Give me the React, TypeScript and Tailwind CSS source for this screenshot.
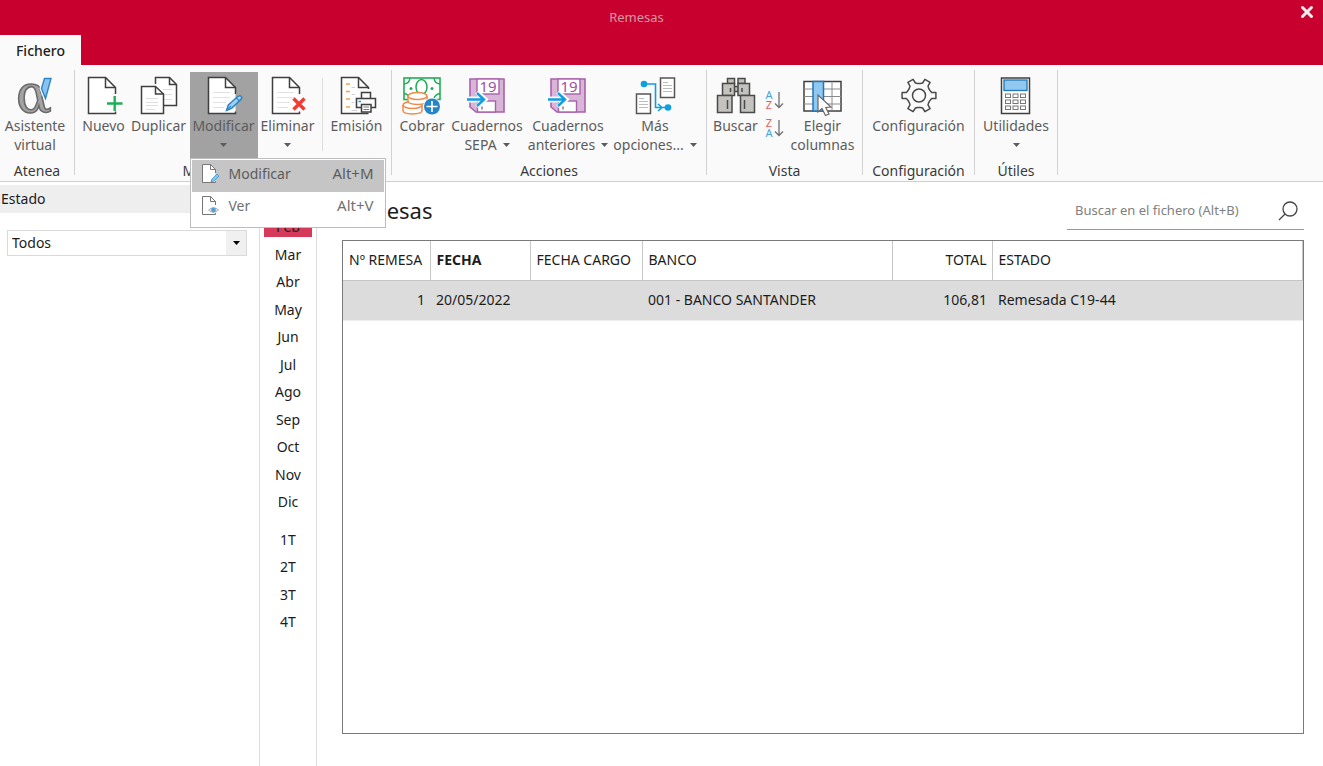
import React, { useState } from 'react';
import { X } from 'lucide-react';

const INK = '#3f3f3f';
const BLUE = '#0f9fe0';

const Svg = ({ children }: { children: React.ReactNode }) => (
  <svg width="40" height="40" viewBox="0 0 40 40" fill="none" aria-hidden="true" className="shrink-0 overflow-visible">
    {children}
  </svg>
);

const Page = ({ lines = false }: { lines?: boolean }) => (
  <>
    <path d="M31.5 18V11.5L21.5 1.5H4.5V37.5H31.5V35.5" fill="#fff" stroke={INK} strokeWidth="1.5" />
    <path d="M21.5 1.5V11.5H31.5" stroke={INK} strokeWidth="1.5" />
    {lines && <path d="M9 16.5H26M9 21.5H26M9 26.5H22M9 31.5H20" stroke="#e2e2e2" />}
  </>
);

const AssistantIcon = () => (
  <Svg>
    <text x="19" y="36" textAnchor="middle" fontFamily="DejaVu Serif" fontSize="53" fill="#a3a3a3" stroke="#6b6b6b" strokeWidth="1.6">α</text>
    <path d="M29.5 2.5H36L30.5 22.5L26.5 12.5Z" fill="#8cc3ee" stroke="#fafafa" strokeWidth="4" />
    <path d="M29.5 2.5H36L30.5 22.5L26.5 12.5Z" fill="#8cc3ee" stroke="#2c86c8" strokeWidth="1.4" />
  </Svg>
);

const NewIcon = () => (
  <Svg>
    <Page />
    <path d="M30.7 20V35M23 27.5H38.5" stroke="#1fae57" strokeWidth="2.4" />
  </Svg>
);

const DuplicateIcon = () => (
  <Svg>
    <path d="M16.5 8V1.5H30.5L37.5 8.5V29.5H25" fill="#fff" stroke={INK} strokeWidth="1.5" />
    <path d="M30.5 1.5V8.5H37.5" stroke={INK} strokeWidth="1.5" />
    <path d="M24 13.5H33M25 18.5H33M25 23.5H33" stroke="#dedede" />
    <path d="M2.5 10.5H16.5L24.5 18V37.5H2.5Z" fill="#fff" stroke={INK} strokeWidth="1.5" />
    <path d="M16.5 10.5V18H24.5" stroke={INK} strokeWidth="1.5" />
    <path d="M7 22.5H19M7 26.5H19M7 29.5H19M7 33.5H16" stroke="#dedede" />
  </Svg>
);

const EditIcon = () => (
  <Svg>
    <Page lines />
    <path d="M22.5 34.5L24.3 29L34 20.3Q36 19 37.2 20.3Q38.4 21.8 37 23.4L27.6 32.4Z" fill="#a6d0f0" stroke="#2f86c5" strokeWidth="1.5" />
    <path d="M32.2 21.8L35.4 25M22.5 34.5L27 30" stroke="#2f86c5" strokeWidth="1.2" />
  </Svg>
);

const DeleteIcon = () => (
  <Svg>
    <Page lines />
    <path d="M25.5 22.5L36.5 33.5M36.5 22.5L25.5 33.5" stroke="#fafafa" strokeWidth="6" />
    <path d="M25.5 22.5L36.5 33.5M36.5 22.5L25.5 33.5" stroke="#f03c35" strokeWidth="3.4" />
  </Svg>
);

const PrintIcon = () => (
  <Svg>
    <path d="M31.5 13V11.5L21.5 1.5H4.5V37.5H31.5" fill="#fff" stroke={INK} strokeWidth="1.5" />
    <path d="M21.5 1.5V11.5H31.5" stroke={INK} strokeWidth="1.5" />
    <path d="M9 8H13M9 15.5H13M9 23H13M9 31H13" stroke="#f5a33a" strokeWidth="1.6" />
    <path d="M14.5 11.5H18M14.5 18.5H18M14.5 26.5H17M14.5 34.5H20" stroke="#cfcfcf" />
    <path d="M17 20H22V14H35V20H40V34H17Z" fill="#fafafa" />
    <path d="M24.5 22.5V16.5H33.5V22.5M24 31.5H19.5V22.5H38.5V31.5H34" stroke={INK} strokeWidth="1.5" />
    <rect x="24.5" y="28.5" width="9.5" height="7.5" fill="#fff" stroke={INK} strokeWidth="1.5" />
    <path d="M26.5 31H32M26.5 33.5H32" stroke="#777" />
    <path d="M21.5 25.5H24" stroke={BLUE} strokeWidth="1.5" />
  </Svg>
);

const CashIcon = () => (
  <Svg>
    <rect x="2" y="2" width="36" height="21.5" fill="#fff" stroke="#1fae57" strokeWidth="1.6" />
    <path d="M2 8Q7.5 7.5 8 2M38 8Q32.5 7.5 32 2M2 17.5Q6 18 8 22M38 17.5Q34 18 32 22" stroke="#1fae57" strokeWidth="1.5" />
    <ellipse cx="19.5" cy="11" rx="5.5" ry="7.5" stroke="#1fae57" strokeWidth="1.5" />
    <circle cx="9" cy="12.5" r="1.5" fill="#1fae57" />
    <circle cx="30" cy="12.5" r="1.5" fill="#1fae57" />
    <g fill="#fff" stroke="#ee8a4a" strokeWidth="1.5">
      <path d="M1 29V34.5C1 39 20 39 20 34.5V29" />
      <ellipse cx="10.5" cy="29" rx="9.5" ry="3.6" />
      <path d="M6 20V25C6 29.5 25 29.5 25 25V20" />
      <ellipse cx="15.5" cy="20" rx="9.5" ry="3.6" />
    </g>
    <circle cx="30" cy="30.5" r="9" fill="#fafafa" />
    <circle cx="30" cy="30.5" r="8" fill="#2585c7" />
    <path d="M30 25V36M24.5 30.5H35.5" stroke="#fff" strokeWidth="1.6" />
  </Svg>
);

const DiskIcon = () => (
  <Svg>
    <path d="M3 3H37V36H9L3 31Z" fill="#d9b5d8" stroke="#a862ab" strokeWidth="1.6" />
    <rect x="10" y="3" width="22" height="15" fill="#fff" stroke="#a862ab" strokeWidth="1.4" />
    <text x="21" y="16" textAnchor="middle" fontFamily="Noto Sans" fontSize="15" fill="#a04fa5">19</text>
    <rect x="10.5" y="25" width="18" height="11" fill="#fff" stroke="#a862ab" strokeWidth="1.4" />
    <path d="M0 23.5H15" stroke="#fafafa" strokeWidth="6" />
    <path d="M10 16L18 23.5L10 31" stroke="#fff" strokeWidth="5" />
    <path d="M0 23.5H16M10 17L17 23.5L10 30" stroke={BLUE} strokeWidth="2.4" />
    <path d="M15 30.5V33.5" stroke="#8d7a8d" strokeWidth="1.5" />
  </Svg>
);

const MoreIcon = () => (
  <Svg>
    <path d="M9 8H20.5V31.5H33M23 28L27 31.5L23 35" stroke={BLUE} strokeWidth="1.6" />
    <circle cx="9" cy="8" r="3.3" fill={BLUE} />
    <circle cx="33" cy="31.5" r="3.3" fill={BLUE} />
    <rect x="25.5" y="2" width="14" height="19.5" fill="#fff" stroke="#555" strokeWidth="1.5" />
    <rect x="1.5" y="18" width="14" height="19.5" fill="#fff" stroke="#555" strokeWidth="1.5" />
    <path d="M28 6.5H33M28 9.5H37M28 12.5H37M28 15.5H37M4 22.5H9M4 25.5H13M4 28.5H13M4 31.5H13" stroke="#bdbdbd" />
  </Svg>
);

const BinocularsIcon = () => (
  <Svg>
    <g fill="#c3c2be" stroke="#4a4a4a" strokeWidth="1.5">
      <rect x="18" y="10.5" width="4.5" height="5" />
      <rect x="11.5" y="2.5" width="7" height="5" />
      <rect x="22" y="2.5" width="7" height="5" />
      <rect x="6.5" y="7.5" width="12" height="12" />
      <rect x="22" y="7.5" width="11.5" height="12" />
      <rect x="1.5" y="19.5" width="14.5" height="17" />
      <rect x="24.5" y="19.5" width="14" height="17" />
      <path d="M11.5 24V33M28.5 24V33M14.5 12V16M26 12V16" />
    </g>
  </Svg>
);

const ColumnsIcon = () => (
  <Svg>
    <rect x="1" y="5.5" width="37" height="29.5" fill="#fff" stroke={INK} strokeWidth="1.5" />
    <path d="M1 13H38M1 20.5H38M1 28H38M29 5.5V35" stroke="#8a8a8a" />
    <rect x="10" y="5.5" width="10.5" height="29.5" fill="#90c8ef" stroke="#1f77b9" strokeWidth="1.5" />
    <path d="M15 19V36L19 32.5L22.5 39.5L26 38L22.8 31.5L28 31Z" fill="#fff" stroke="#666" strokeWidth="1.2" />
  </Svg>
);

const point = (radius: number, degrees: number) => {
  const a = (degrees * Math.PI) / 180;
  return `${(20 + radius * Math.cos(a)).toFixed(1)} ${(19.5 + radius * Math.sin(a)).toFixed(1)}`;
};

const gearPath = `M${[0, 60, 120, 180, 240, 300]
  .map((a) => [point(12, a - 24), point(13, a - 14), point(17.2, a - 10), point(17.2, a + 10), point(13, a + 14), point(12, a + 24)].join('L'))
  .join('L')}Z`;

const GearIcon = () => (
  <Svg>
    <path d={gearPath} stroke="#4a4a4a" strokeWidth="1.5" strokeLinejoin="round" />
    <circle cx="20" cy="19.5" r="6.5" stroke="#4a4a4a" strokeWidth="1.5" />
  </Svg>
);

const CalculatorIcon = () => (
  <Svg>
    <rect x="5.5" y="2" width="28" height="35.5" fill="#fff" stroke={INK} strokeWidth="1.5" />
    <rect x="8" y="4" width="23" height="10.5" fill="#90c8ef" stroke="#1f77b9" strokeWidth="1.3" />
    {[18, 24, 30].map((y) =>
      [9.5, 17, 24.5].map((x) => <rect key={`${x}-${y}`} x={x} y={y} width="5" height="3.5" fill="#fff" stroke="#777" />)
    )}
  </Svg>
);

const SortIcon = ({ top, bottom }: { top: string; bottom: string }) => (
  <svg width="20" height="20" viewBox="0 0 20 20" fill="none" aria-hidden="true" className="overflow-visible">
    <g fontFamily="Noto Sans" fontSize="11" textAnchor="middle">
      <text x="5" y="9" fill={top === 'A' ? '#4ba3dc' : '#ee5a57'}>{top}</text>
      <text x="5" y="19" fill={bottom === 'A' ? '#4ba3dc' : '#ee5a57'}>{bottom}</text>
    </g>
    <path d="M15 2V17.5M11 13.5L15 17.5L19 13.5" stroke="#707070" strokeWidth="1.3" />
  </svg>
);

const SmallPage = ({ kind }: { kind: 'edit' | 'view' }) => (
  <svg width="20" height="20" viewBox="0 0 20 20" fill="none" aria-hidden="true">
    <path d="M14.5 9V5.5L9.5 0.5H1.5V18.5H14.5V17" fill="#fff" stroke="#777" />
    <path d="M9.5 0.5V5.5H14.5" stroke="#777" />
    {kind === 'edit' ? (
      <path d="M10 18L11 15L16 10L18 12L13 17Z" fill="#8fc4ea" stroke="#4e9fd6" />
    ) : (
      <>
        <path d="M7.5 14Q12.5 9.5 17.5 14Q12.5 18.5 7.5 14Z" fill="#e8f0f5" stroke="#9cb3c2" />
        <circle cx="12.5" cy="14" r="2.4" fill="#5a9fd0" />
      </>
    )}
  </svg>
);

const Caret = () => (
  <svg width="7" height="4" viewBox="0 0 7 4" aria-hidden="true">
    <path d="M0 0H7L3.5 4Z" fill="currentColor" />
  </svg>
);

interface RibbonButtonProps {
  icon: React.ReactNode;
  label: string;
  second?: string;
  caret?: boolean;
  width: string;
  active?: boolean;
  onClick?: () => void;
}

const RibbonButton = ({ icon, label, second, caret, width, active, onClick }: RibbonButtonProps) => (
  <button
    type="button"
    onClick={onClick}
    className={`${width} flex h-[86px] flex-col items-center whitespace-nowrap pt-1 text-sm leading-[19px] text-[#5c5c5c] ${active ? 'bg-[#a2a2a2]' : ''}`}
  >
    {icon}
    <span>{label}</span>
    {(second || caret) && (
      <span className="flex h-[19px] items-center gap-1.5">
        {second}
        {caret && <Caret />}
      </span>
    )}
  </button>
);

interface RibbonGroupProps {
  title: string;
  width: string;
  start?: boolean;
  children: React.ReactNode;
}

const RibbonGroup = ({ title, width, start, children }: RibbonGroupProps) => (
  <>
    <section aria-label={title} className={`${width} shrink-0 pt-[7px]`}>
      <div className={`flex ${start ? 'justify-start' : 'justify-center'}`}>{children}</div>
      <div className="pt-1 text-center text-sm leading-[18px] text-[#3a3a3a]">{title}</div>
    </section>
    <div className="mt-[5px] h-[105px] w-px shrink-0 bg-[#d2d2d2]" />
  </>
);

const months = ['Ene', 'Feb', 'Mar', 'Abr', 'May', 'Jun', 'Jul', 'Ago', 'Sep', 'Oct', 'Nov', 'Dic'];
const quarters = ['1T', '2T', '3T', '4T'];

const remesas = [
  { numero: 1, fecha: '20/05/2022', cargo: '', banco: '001 - BANCO SANTANDER', total: '106,81', estado: 'Remesada C19-44' },
];

export default function App() {
  const [menuOpen, setMenuOpen] = useState(true);
  const [period, setPeriod] = useState('Feb');

  const periodButton = (name: string) => (
    <button
      key={name}
      type="button"
      onClick={() => setPeriod(name)}
      className={`h-5 w-12 self-center text-sm leading-5 ${period === name ? 'bg-[#d53a5a]' : ''}`}
    >
      {name}
    </button>
  );

  return (
    <div className="flex min-h-screen flex-col bg-white font-['Noto_Sans','Open_Sans',sans-serif] text-[#1c1c1c]">
      <header className="bg-[#c8002e]">
        <div className="grid h-[35px] grid-cols-[1fr_auto_1fr]">
          <h1 className="col-start-2 pr-[50px] text-[13px] leading-[34px] text-[#d49aa3]">Remesas</h1>
          <button type="button" aria-label="Cerrar" className="flex h-6 w-8 items-center justify-center justify-self-end text-[#eee]">
            <X size={18} strokeWidth={4} />
          </button>
        </div>
        <button type="button" className="block h-[30px] w-[81px] bg-[#fafafa] pt-0.5 text-sm font-medium">
          Fichero
        </button>
      </header>

      <nav className="flex h-[117px] border-b border-[#d0d0d0] bg-[#fafafa]">
        <RibbonGroup title="Atenea" width="w-[74px]" start>
          <RibbonButton width="w-[70px]" icon={<AssistantIcon />} label="Asistente" second="virtual" />
        </RibbonGroup>
        <RibbonGroup title="Mantenimiento" width="w-[316px]">
          <RibbonButton width="w-[48px]" icon={<NewIcon />} label="Nuevo" />
          <RibbonButton width="w-[62px]" icon={<DuplicateIcon />} label="Duplicar" />
          <div className="relative">
            <RibbonButton width="w-[68px]" icon={<EditIcon />} label="Modificar" caret active={menuOpen} onClick={() => setMenuOpen(!menuOpen)} />
            {menuOpen && (
              <div role="menu" className="absolute top-full left-0 z-10 h-[70px] w-[196px] border border-[#bdbdbd] bg-white p-px text-sm text-[#707070]">
                <button type="button" role="menuitem" className="flex h-8 w-full items-center gap-2 bg-[#c5c5c5] pr-2.5 pb-1 pl-[9px] text-[#5c5c5c]">
                  <SmallPage kind="edit" />
                  <span>Modificar</span>
                  <span className="ml-auto text-[15px]">Alt+M</span>
                </button>
                <button type="button" role="menuitem" className="flex h-8 w-full items-center gap-2 pr-2.5 pb-1 pl-[9px]">
                  <SmallPage kind="view" />
                  <span>Ver</span>
                  <span className="ml-auto text-[15px]">Alt+V</span>
                </button>
              </div>
            )}
          </div>
          <RibbonButton width="w-[60px]" icon={<DeleteIcon />} label="Eliminar" caret />
          <div className="mx-1 mt-1.5 h-[73px] w-px bg-[#dedede]" />
          <RibbonButton width="w-[60px]" icon={<PrintIcon />} label="Emisión" />
        </RibbonGroup>
        <RibbonGroup title="Acciones" width="w-[314px]" start>
          <RibbonButton width="w-[60px]" icon={<CashIcon />} label="Cobrar" />
          <RibbonButton width="w-[70px]" icon={<DiskIcon />} label="Cuadernos" second="SEPA" caret />
          <RibbonButton width="w-[92px]" icon={<DiskIcon />} label="Cuadernos" second="anteriores" caret />
          <RibbonButton width="w-[82px]" icon={<MoreIcon />} label="Más" second="opciones..." caret />
        </RibbonGroup>
        <RibbonGroup title="Vista" width="w-[155px]">
          <RibbonButton width="w-[54px]" icon={<BinocularsIcon />} label="Buscar" />
          <div className="flex w-[22px] flex-col items-center gap-2 pt-[18px]">
            <button type="button" aria-label="Orden ascendente">
              <SortIcon top="A" bottom="Z" />
            </button>
            <button type="button" aria-label="Orden descendente">
              <SortIcon top="Z" bottom="A" />
            </button>
          </div>
          <RibbonButton width="w-[76px]" icon={<ColumnsIcon />} label="Elegir" second="columnas" />
        </RibbonGroup>
        <RibbonGroup title="Configuración" width="w-[111px]">
          <RibbonButton width="w-[100px]" icon={<GearIcon />} label="Configuración" />
        </RibbonGroup>
        <RibbonGroup title="Útiles" width="w-[82px]">
          <RibbonButton width="w-[76px]" icon={<CalculatorIcon />} label="Utilidades" caret />
        </RibbonGroup>
      </nav>

      <div className="flex grow">
        <aside className="w-[260px] shrink-0 border-r border-[#dcdcdc] pt-[3px]">
          <label htmlFor="estado" className="block h-7 bg-[#eee] pl-px text-sm leading-7">
            Estado
          </label>
          <div className="relative mx-[7px] mt-[17px] w-[240px] border border-[#dadada]">
            <select id="estado" className="block h-6 w-full appearance-none bg-white pl-1 text-sm">
              <option>Todos</option>
            </select>
            <span className="pointer-events-none absolute inset-y-0 right-0 flex w-5 items-center justify-center bg-[#f0f0f0] text-black">
              <Caret />
            </span>
          </div>
        </aside>

        <div className="w-[57px] shrink-0 border-r border-[#dcdcdc] pt-1">
          <div className="grid h-[330px] grid-rows-12 justify-center">{months.map(periodButton)}</div>
          <div className="mt-2.5 grid h-[110px] grid-rows-4 justify-center">{quarters.map(periodButton)}</div>
        </div>

        <main className="flex grow flex-col pt-3 pr-[19px] pb-8 pl-[25px]">
          <div className="flex items-start justify-between">
            <h2 className="-ml-0.5 text-[22px] leading-8">Remesas</h2>
            <div className="flex h-9 w-[237px] items-center border-b border-[#999] pr-1.5 pb-0.5 pl-2">
              <input
                type="search"
                aria-label="Buscar en el fichero"
                placeholder="Buscar en el fichero (Alt+B)"
                className="min-w-0 grow text-[13px] outline-none placeholder:text-[#808080]"
              />
              <svg width="20" height="20" viewBox="0 0 20 20" fill="none" stroke="#444" strokeWidth="1.3" aria-hidden="true">
                <circle cx="12" cy="8" r="7" />
                <path d="M7 13L1 19" />
              </svg>
            </div>
          </div>

          <div className="mt-[10px] grow border border-[#7a7a7a]">
            <table className="w-full table-fixed text-sm">
              <thead>
                <tr className="h-[39px] border-b border-[#c6c6c6] text-left [&>th]:border-r [&>th]:border-[#c6c6c6] [&>th]:pr-[5px] [&>th]:pl-1.5 [&>th]:whitespace-nowrap">
                  <th className="w-[87px] font-normal">Nº REMESA</th>
                  <th className="w-[100px] font-bold">FECHA</th>
                  <th className="w-[112px] font-normal">FECHA CARGO</th>
                  <th className="w-[250px] font-normal">BANCO</th>
                  <th className="w-[100px] text-right font-normal">TOTAL</th>
                  <th className="font-normal">ESTADO</th>
                </tr>
              </thead>
              <tbody>
                {remesas.map((r) => (
                  <tr key={r.numero} className="h-10 border-b border-[#efefef] bg-[#dcdcdc] [&>td]:pr-[5px] [&>td]:pl-1.5">
                    <td className="text-right">{r.numero}</td>
                    <td>{r.fecha}</td>
                    <td>{r.cargo}</td>
                    <td>{r.banco}</td>
                    <td className="text-right">{r.total}</td>
                    <td>{r.estado}</td>
                  </tr>
                ))}
              </tbody>
            </table>
          </div>
        </main>
      </div>
    </div>
  );
}
